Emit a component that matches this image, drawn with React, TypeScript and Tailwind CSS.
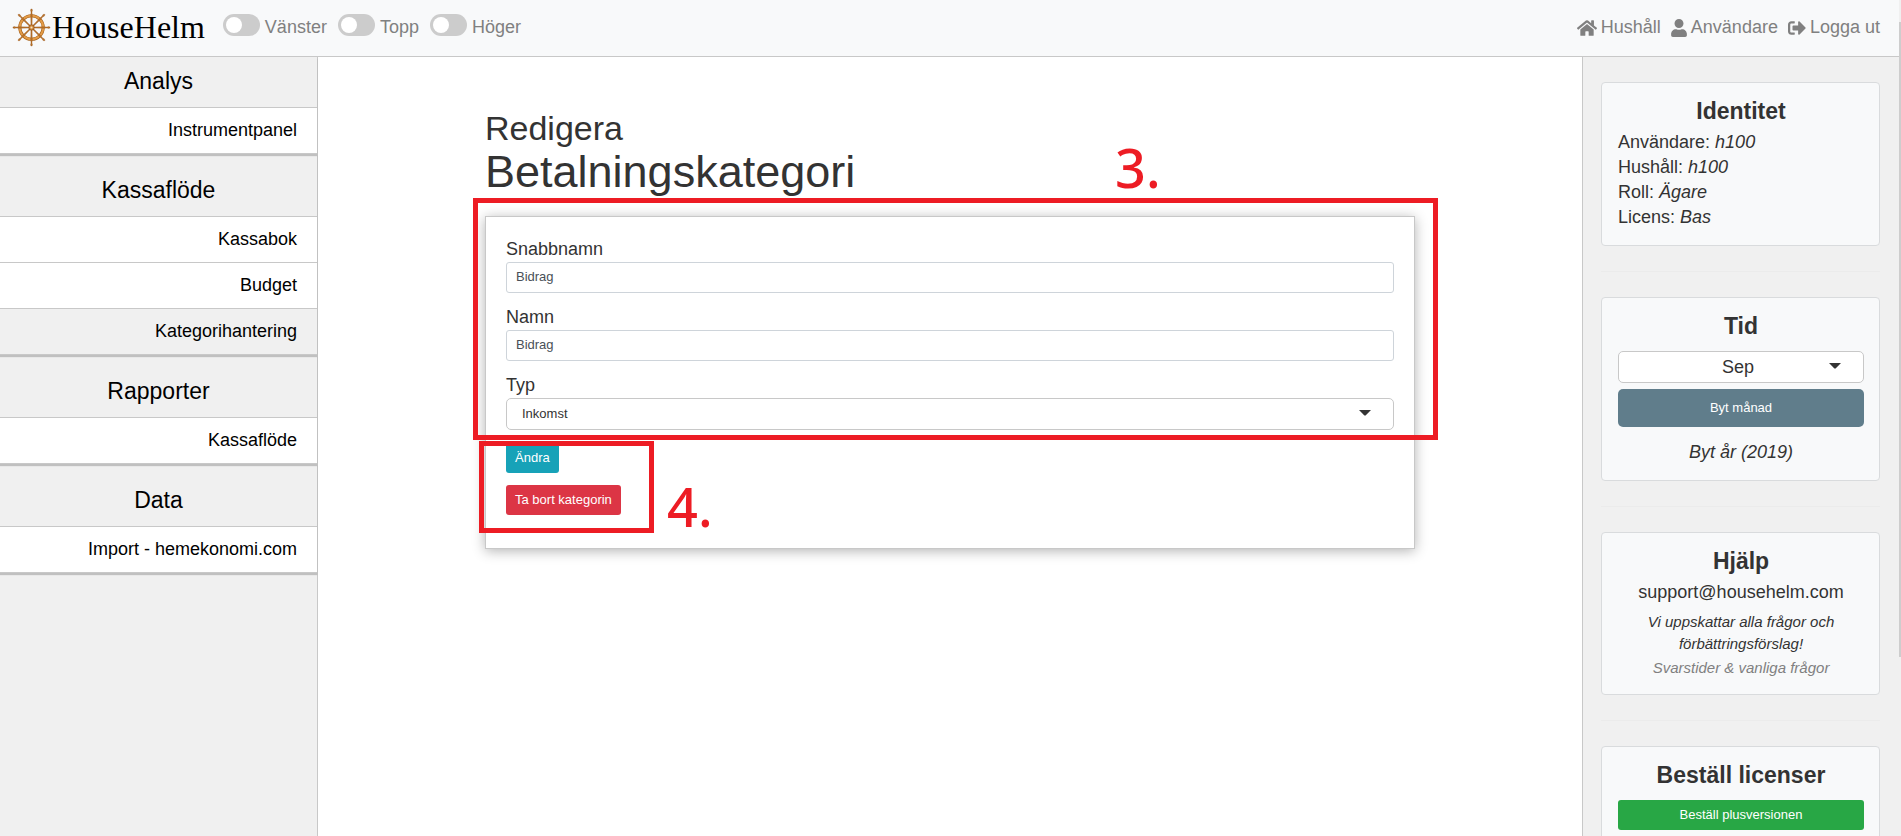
import React, { useState } from 'react';
import { FaHome, FaUser, FaSignOutAlt } from 'react-icons/fa';

interface MenuItem {
  label: string;
  active?: boolean;
}

interface MenuGroup {
  title: string;
  items: MenuItem[];
}

const menu: MenuGroup[] = [
  { title: 'Analys', items: [{ label: 'Instrumentpanel' }] },
  {
    title: 'Kassaflöde',
    items: [{ label: 'Kassabok' }, { label: 'Budget' }, { label: 'Kategorihantering', active: true }],
  },
  { title: 'Rapporter', items: [{ label: 'Kassaflöde' }] },
  { title: 'Data', items: [{ label: 'Import - hemekonomi.com' }] },
];

const identity = [
  ['Användare', 'h100'],
  ['Hushåll', 'h100'],
  ['Roll', 'Ägare'],
  ['Licens', 'Bas'],
];

const months = ['Jan', 'Feb', 'Mar', 'Apr', 'Maj', 'Jun', 'Jul', 'Aug', 'Sep', 'Okt', 'Nov', 'Dec'];
const spokes = [0, 45, 90, 135, 180, 225, 270, 315];

const HelmIcon = () => (
  <svg viewBox="0 0 40 40" className="w-[39px] h-[39px]" aria-hidden="true">
    <circle cx="20" cy="20" r="12" fill="none" stroke="#a8641f" strokeWidth="3.2" />
    <circle cx="20" cy="20" r="12" fill="none" stroke="#e39c48" strokeWidth="2" />
    {spokes.map((angle) => (
      <path
        key={angle}
        d="M19.4 18 L19.2 8 L19.5 4 L19 2.6 L19.4 1 H20.6 L21 2.6 L20.5 4 L20.8 8 L20.6 18 Z"
        fill="#b8722a"
        stroke="#8f5016"
        strokeWidth="0.3"
        transform={`rotate(${angle} 20 20)`}
      />
    ))}
    <circle cx="20" cy="20" r="2.8" fill="#d08a3a" stroke="#8a4b14" strokeWidth="0.7" />
    <circle cx="20" cy="20" r="1.1" fill="#f6e3c8" />
  </svg>
);

const Caret = ({ className }: { className: string }) => (
  <svg viewBox="0 0 12 6" className={`absolute w-3 h-[6px] pointer-events-none ${className}`} aria-hidden="true">
    <path d="M0 0 H12 L6.6 5.6 H5.4 Z" fill="#333" />
  </svg>
);

const Toggle = ({ label }: { label: string }) => {
  const [on, setOn] = useState(false);

  return (
    <label className="flex items-start gap-[5px] leading-[27px] cursor-pointer">
      <input
        type="checkbox"
        checked={on}
        onChange={() => setOn(!on)}
        className="appearance-none w-[37px] h-[22px] p-[3px] rounded-full bg-[#ccc] checked:bg-[#17a2b8] cursor-pointer before:block before:w-4 before:h-4 before:rounded-full before:bg-white checked:before:ml-[15px]"
      />
      {label}
    </label>
  );
};

const SideCard = ({ title, children }: { title: string; children: React.ReactNode }) => (
  <section className="bg-[#f8f9fa] border border-[#d9dbdd] rounded pl-4 pr-[15px] pt-[14px] pb-[15px] text-center">
    <h5 className="text-[23px] leading-7 font-bold mb-[5px]">{title}</h5>
    {children}
  </section>
);

const Divider = () => <hr className="my-[25px] border-0 h-px bg-[#ebebeb]" />;

const App: React.FC = () => {
  const [shortName, setShortName] = useState('Bidrag');
  const [name, setName] = useState('Bidrag');
  const [type, setType] = useState('Inkomst');
  const [month, setMonth] = useState('Sep');

  const inputClass =
    'block w-full h-[31px] px-[9px] pb-[2px] text-[13px] text-[#495057] bg-white border border-[#ced4da] rounded-[3px]';

  return (
    <div className="flex h-screen overflow-hidden bg-white text-[#333] text-[18px] leading-[25px] font-['Liberation_Sans',Arial,sans-serif]">
      <div className="flex flex-col flex-1 min-w-0">
        {/* Top bar */}
        <header className="flex items-start justify-between shrink-0 h-[57px] pl-3 pr-[19px] bg-[#f8f9fa] border-b border-[#c8c8c8] text-[#808080]">
          <div className="flex items-start">
            <a href="#" className="flex items-center gap-px h-[54px] text-black text-[32px] font-['Liberation_Serif','Times_New_Roman',serif]">
              <HelmIcon />
              HouseHelm
            </a>
            <div className="flex gap-[11px] pt-[14px] pl-[18px]">
              <Toggle label="Vänster" />
              <Toggle label="Topp" />
              <Toggle label="Höger" />
            </div>
          </div>
          <nav className="flex gap-[10px] pt-[14px] leading-[27px]">
            <a href="#" className="flex items-center gap-1">
              <FaHome className="w-5 h-[18px]" />
              Hushåll
            </a>
            <a href="#" className="flex items-center gap-1">
              <FaUser className="w-4 h-[18px]" />
              Användare
            </a>
            <a href="#" className="flex items-center gap-1">
              <FaSignOutAlt className="w-[18px] h-[18px]" />
              Logga ut
            </a>
          </nav>
        </header>

        <div className="flex flex-1 min-h-0">
          {/* Left menu */}
          <aside className="w-[318px] shrink-0 bg-[#f0f0f0] border-r border-[#c8c8c8] text-black">
            {menu.map((group, i) => (
              <div key={group.title} className="border-b border-[#c8c8c8] shadow-[0_2px_1px_rgba(0,0,0,0.2)]">
                <h4 className={`text-[23px] leading-[34px] text-center pb-[9px] ${i === 0 ? 'pt-[7px]' : 'pt-[19px]'}`}>{group.title}</h4>
                {group.items.map((item) => (
                  <a
                    key={item.label}
                    href="#"
                    className={`block border-t border-[#c8c8c8] py-[10px] pr-5 text-right ${item.active ? 'bg-[#f0f0f0]' : 'bg-white'}`}
                  >
                    {item.label}
                  </a>
                ))}
              </div>
            ))}
          </aside>

          {/* Edit form */}
          <main className="flex-1 min-w-0 px-8 pt-[51px]">
            <div className="max-w-[930px] mx-auto">
              <h1 className="text-[45px] leading-[48px]">
                <span className="block text-[34px] leading-10">Redigera</span>
                Betalningskategori
              </h1>

              <form
                className="relative mt-5 px-5 pt-5 pb-[33px] border border-[#c8c8c8] bg-white shadow-[0_2px_12px_rgba(0,0,0,0.3)]"
                onSubmit={(e) => e.preventDefault()}
              >
                <div className="mb-3">
                  <label htmlFor="short-name" className="block">Snabbnamn</label>
                  <input id="short-name" type="text" value={shortName} onChange={(e) => setShortName(e.target.value)} className={inputClass} />
                </div>
                <div className="mb-3">
                  <label htmlFor="name" className="block">Namn</label>
                  <input id="name" type="text" value={name} onChange={(e) => setName(e.target.value)} className={inputClass} />
                </div>
                <div>
                  <label htmlFor="type" className="block">Typ</label>
                  <div className="relative">
                    <select
                      id="type"
                      value={type}
                      onChange={(e) => setType(e.target.value)}
                      className="appearance-none block w-full h-8 px-[15px] pb-[2px] text-[13px] bg-white border border-[#c8c8c8] rounded-[5px]"
                    >
                      <option>Inkomst</option>
                      <option>Utgift</option>
                    </select>
                    <Caret className="right-[23px] top-3" />
                  </div>
                </div>
                <div className="flex flex-col items-start gap-3 mt-[13px] text-[13px] text-white">
                  <button type="submit" className="h-[30px] px-[9px] pb-[2px] rounded-[3px] bg-[#17a2b8]">Ändra</button>
                  <button type="button" className="h-[30px] px-[9px] pb-[2px] rounded-[3px] bg-[#dc3545]">Ta bort kategorin</button>
                </div>

                {/* Step markers */}
                <div className="absolute -left-[13px] -right-[24px] -top-[19px] h-[242px] border-[5px] border-[#ed1c24] pointer-events-none" />
                <div className="absolute -left-[7px] top-[224px] w-[175px] h-[92px] border-[5px] border-[#ed1c24] pointer-events-none" />
                <span className="absolute left-[629px] -top-[77px] text-[54px] leading-[54px] font-medium text-[#ed1c24] font-['Noto_Sans',Calibri,sans-serif]">3.</span>
                <span className="absolute left-[181px] top-[262px] text-[54px] leading-[54px] font-medium text-[#ed1c24] font-['Noto_Sans',Calibri,sans-serif]">4.</span>
              </form>
            </div>
          </main>

          {/* Right column */}
          <aside className="w-[317px] shrink-0 overflow-hidden pl-[18px] pr-[19px] pt-[25px] bg-[#f0f0f0] border-l border-[#c8c8c8]">
            <SideCard title="Identitet">
              <ul className="text-left">
                {identity.map(([key, value]) => (
                  <li key={key}>
                    {key}: <i>{value}</i>
                  </li>
                ))}
              </ul>
            </SideCard>

            <Divider />

            <SideCard title="Tid">
              <div className="relative mt-[11px]">
                <select
                  aria-label="Månad"
                  value={month}
                  onChange={(e) => setMonth(e.target.value)}
                  className="appearance-none block w-full h-8 pr-[6px] text-center bg-white border border-[#c8c8c8] rounded-[5px]"
                >
                  {months.map((m) => (
                    <option key={m}>{m}</option>
                  ))}
                </select>
                <Caret className="right-[23px] top-3" />
              </div>
              <button type="button" className="block w-full h-[38px] mt-[6px] pb-[2px] rounded-[5px] bg-[#607d8b] text-white text-[13px]">
                Byt månad
              </button>
              <a href="#" className="block mt-[13px] italic">Byt år (2019)</a>
            </SideCard>

            <Divider />

            <SideCard title="Hjälp">
              <a href="#" className="block">support@househelm.com</a>
              <p className="mt-[6px] px-5 text-[15px] leading-[22px] italic">Vi uppskattar alla frågor och förbättringsförslag!</p>
              <a href="#" className="block mt-[2px] text-[15px] leading-[22px] italic text-[#808080]">Svarstider &amp; vanliga frågor</a>
            </SideCard>

            <Divider />

            <SideCard title="Beställ licenser">
              <button type="button" className="block w-full h-[30px] mt-[11px] pb-[2px] rounded-[3px] bg-[#28a745] text-white text-[13px]">
                Beställ plusversionen
              </button>
            </SideCard>
          </aside>
        </div>
      </div>

      {/* Thin scroll track along the window edge */}
      <div className="w-[2px] shrink-0 pt-[22px] bg-[#f0f0f0]">
        <div className="h-[78%] bg-[#cdcdcd]" />
      </div>
    </div>
  );
};

export default App;
